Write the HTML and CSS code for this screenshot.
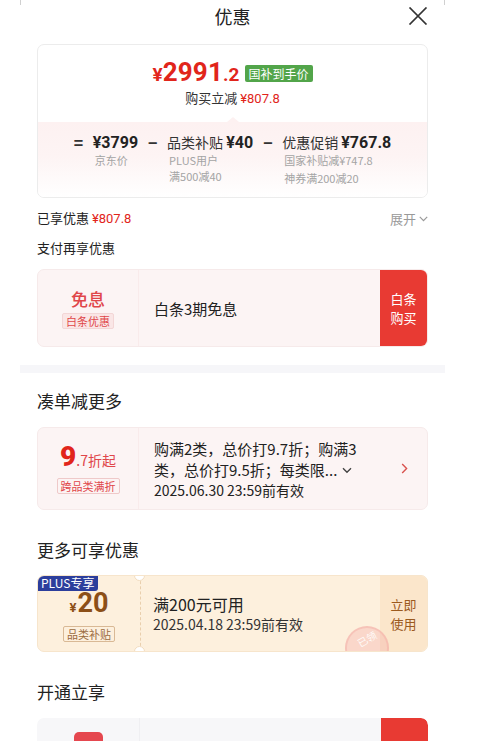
FILE: index.html
```html
<!DOCTYPE html>
<html lang="zh-CN">
<head>
<meta charset="utf-8">
<title>优惠</title>
<link rel="stylesheet" href="styles.css">
</head>
<body>
<div class="sheet">
  <header class="header">
    <h1 class="title">优惠</h1>
    <span class="close" aria-label="关闭">
      <svg width="20" height="18" viewBox="0 0 20 18"><path d="M1.5 0.5 L18.5 17.5 M18.5 0.5 L1.5 17.5" stroke="#333" stroke-width="1.7" fill="none"/></svg>
    </span>
  </header>

  <section class="summary">
    <div class="summary-top">
      <div class="price-line">
        <span class="price"><span class="yen">¥</span><span class="int">2991</span><span class="dec">.2</span></span>
        <span class="green-tag">国补到手价</span>
      </div>
      <div class="save-line">购买立减 <span class="red num">¥807.8</span></div>
    </div>
    <div class="summary-bottom">
      <span class="op">=</span>
      <div class="col">
        <div class="amt"><b class="num">¥3799</b></div>
        <div class="sub">京东价</div>
      </div>
      <span class="op minus">−</span>
      <div class="col">
        <div class="amt">品类补贴 <b class="num">¥40</b></div>
        <div class="sub">PLUS用户</div>
        <div class="sub">满500减40</div>
      </div>
      <span class="op minus">−</span>
      <div class="col">
        <div class="amt">优惠促销 <b class="num">¥767.8</b></div>
        <div class="sub">国家补贴减¥747.8</div>
        <div class="sub sub-gap">神券满200减20</div>
      </div>
    </div>
  </section>

  <div class="row enjoyed">
    <span>已享优惠 <span class="red num">¥807.8</span></span>
    <span class="expand">展开 <svg width="9" height="6" viewBox="0 0 9 6"><path d="M0.8 0.8 L4.5 4.6 L8.2 0.8" stroke="#999" stroke-width="1.2" fill="none"/></svg></span>
  </div>
  <div class="row pay-more">支付再享优惠</div>

  <div class="card pink-card card-baitiao">
    <div class="card-left">
      <div class="big-red">免息</div>
      <div class="mini-tag red-tag">白条优惠</div>
    </div>
    <div class="card-main single">白条3期免息</div>
    <div class="red-btn">白条<br>购买</div>
  </div>

  <div class="divider"></div>

  <h2 class="section-title first">凑单减更多</h2>
  <div class="card pink-card card-combo">
    <div class="card-left">
      <div class="discount"><span class="d-big">9</span><span class="d-small">.7折起</span></div>
      <div class="mini-tag red-tag boxed">跨品类满折</div>
    </div>
    <div class="card-main multi">
      <div class="line">购满2类，总价打9.7折；购满3</div>
      <div class="line">类，总价打9.5折；每类限... <svg class="more-ic" width="10" height="7" viewBox="0 0 10 7"><path d="M1 1.2 L5 5.2 L9 1.2" stroke="#444" stroke-width="1.4" fill="none"/></svg></div>
      <div class="line date">2025.06.30 23:59前有效</div>
    </div>
    <div class="arrow">
      <svg width="7" height="11" viewBox="0 0 7 11"><path d="M1.2 1 L5.6 5.5 L1.2 10" stroke="#d9534f" stroke-width="1.4" fill="none"/></svg>
    </div>
  </div>

  <h2 class="section-title">更多可享优惠</h2>
  <div class="card coupon">
    <span class="plus-tag">PLUS专享</span>
    <div class="card-left coupon-left">
      <div class="c-price"><span class="c-yen">¥</span><span class="c-int">20</span></div>
      <div class="mini-tag brown-tag">品类补贴</div>
    </div>
    <div class="card-main coupon-main">
      <div class="c-cond">满200元可用</div>
      <div class="c-date">2025.04.18 23:59前有效</div>
    </div>
    <div class="coupon-btn">立即<br>使用</div>
    <span class="stamp"><span class="stamp-text">已领</span></span>
  </div>

  <h2 class="section-title">开通立享</h2>
  <div class="card gray-card">
    <div class="card-left gray-left"><span class="app-icon"></span></div>
    <div class="card-main"></div>
    <div class="red-btn top-only"></div>
  </div>
</div>
</body>
</html>
```

FILE: styles.css
```css
* { box-sizing: border-box; }
html, body { margin: 0; padding: 0; background: #fff; }
body {
  font-family: "Noto Sans CJK SC", "Noto Sans", sans-serif;
  color: #222;
  width: 500px;
  overflow: hidden;
}
.num { font-family: "Roboto", "Noto Sans CJK SC", sans-serif; }
.sheet {
  width: 425px;
  margin-left: 20px;
  padding: 0 17px;
  position: relative;
}
.sheet::before, .sheet::after {
  content: "";
  position: absolute;
  top: 0;
  width: 1px;
  height: 5px;
  background: #d0d0d0;
}
.sheet::before { left: 0; }
.sheet::after { right: 0; }

.header {
  height: 32px;
  display: flex;
  align-items: center;
  justify-content: center;
  position: relative;
}
.title {
  margin: 0;
  font-size: 18px;
  font-weight: 400;
  line-height: 32px;
  color: #222;
}
.close {
  position: absolute;
  right: 0;
  top: 7px;
  width: 20px;
  height: 18px;
  display: block;
}
.close svg { display: block; }

/* summary card */
.summary {
  margin-top: 12px;
  border: 1px solid #ececec;
  border-radius: 7px;
  overflow: hidden;
  height: 154px;
}
.summary-top {
  height: 77px;
  padding-top: 14px;
  display: flex;
  flex-direction: column;
  align-items: center;
}
.price-line {
  height: 30px;
  display: flex;
  align-items: center;
  gap: 5px;
}
.price {
  color: #e1251b;
  font-family: "Roboto", "Noto Sans", sans-serif;
  font-weight: 700;
  line-height: 30px;
  white-space: nowrap;
}
.yen { font-size: 19px; }
.int { font-size: 26px; letter-spacing: 0.2px; }
.dec { font-size: 19px; }
.green-tag {
  background: #52a54a;
  color: #fff;
  font-size: 12px;
  line-height: 17px;
  height: 17px;
  padding: 0 4px;
  border-radius: 2px;
  margin-top: -2px;
}
.save-line {
  font-size: 13px;
  line-height: 18px;
  color: #333;
}
.red { color: #e1251b; }

.summary-bottom {
  height: 76px;
  position: relative;
  background: linear-gradient(180deg, #fdf1f1 0%, #fdf4f4 45%, #ffffff 100%);
  display: flex;
  justify-content: center;
  align-items: flex-start;
  padding-top: 11px;
  gap: 10px;
}
.summary-bottom::before {
  content: "";
  position: absolute;
  left: 189px;
  top: -5px;
  width: 0;
  height: 0;
  border-left: 6px solid transparent;
  border-right: 6px solid transparent;
  border-bottom: 5px solid #fdf1f1;
}
.op {
  font-size: 16px;
  line-height: 18px;
  color: #333;
  font-weight: 700;
  width: 9px;
  text-align: center;
}
.col { display: flex; flex-direction: column; }
.amt {
  font-size: 14px;
  line-height: 18px;
  color: #333;
  white-space: nowrap;
}
.amt b { font-size: 16px; font-weight: 700; color: #222; }
.sub {
  font-size: 11px;
  line-height: 16px;
  color: #a4a4a4;
  white-space: nowrap;
  padding-left: 2px;
}
.sub-gap { margin-top: 2px; }

/* rows */
.row {
  font-size: 13px;
  line-height: 20px;
  color: #222;
}
.enjoyed {
  margin-top: 10px;
  display: flex;
  justify-content: space-between;
  align-items: center;
}
.expand {
  color: #999;
  display: flex;
  align-items: center;
  gap: 3px;
}
.expand svg { display: block; }
.pay-more { margin-top: 9px; }

/* cards */
.card {
  display: flex;
  border-radius: 7px;
  overflow: hidden;
  position: relative;
}
.pink-card {
  background: #fcf4f4;
  border: 1px solid #f6eaea;
}
.card-baitiao { margin-top: 11px; height: 78px; }
.card-left {
  width: 101px;
  flex: none;
  display: flex;
  flex-direction: column;
  align-items: center;
  justify-content: center;
  border-right: 1px solid #f9ebeb;
}
.big-red {
  color: #e0464a;
  font-size: 17px;
  line-height: 22px;
  font-weight: 500;
}
.mini-tag {
  font-size: 11px;
  line-height: 14px;
  height: 16px;
  padding: 0 3px;
  margin-top: 3px;
  border-radius: 2px;
}
.red-tag {
  color: #e0464a;
  background: #fae6e6;
  border: 1px solid #f3d6d6;
}
.red-tag.boxed { background: transparent; border-color: #efc9c9; margin-top: 4px; }
.card-main {
  flex: 1;
  padding-left: 15px;
  display: flex;
  flex-direction: column;
  justify-content: center;
}
.single { font-size: 15px; color: #222; }
.red-btn {
  width: 47px;
  flex: none;
  background: #e83a33;
  color: #fff;
  font-size: 13px;
  line-height: 19px;
  display: flex;
  align-items: center;
  justify-content: center;
  text-align: center;
}

.divider {
  margin: 18px -17px 0;
  height: 8px;
  background: #f6f6f9;
}

.section-title {
  margin: 29px 0 0;
  font-size: 17px;
  font-weight: 400;
  line-height: 22px;
  color: #222;
}
.section-title.first { margin-top: 17px; }

.card-combo { margin-top: 15px; height: 83px; }
.discount {
  color: #e0464a;
  line-height: 28px;
  white-space: nowrap;
}
.d-big {
  font-family: "Roboto", "Noto Sans", sans-serif;
  font-weight: 900;
  font-size: 28px;
  color: #e1251b;
}
.d-small { font-size: 14px; }
.multi { padding-right: 4px; }
.line {
  font-size: 15px;
  line-height: 21px;
  color: #222;
  white-space: nowrap;
}
.line.date { font-size: 14px; line-height: 20px; }
.more-ic { vertical-align: 2px; margin-left: 1px; }
.arrow {
  width: 30px;
  flex: none;
  display: flex;
  align-items: center;
  padding-left: 4px;
}
.arrow svg { display: block; }

/* coupon */
.coupon {
  margin-top: 14px;
  height: 77px;
  background: #fdf0dd;
  border: 1px solid #f7e5cc;
}
.plus-tag {
  position: absolute;
  left: -1px;
  top: -1px;
  background: #2c3e9c;
  color: #fff;
  font-size: 12px;
  line-height: 16px;
  padding: 0 4px;
  border-bottom-right-radius: 3px;
  z-index: 2;
}
.coupon-left {
  width: 103px;
  border-right: 1px dashed #e9cfad;
  padding-top: 4px;
  position: relative;
}
.coupon-left::before, .coupon-left::after {
  content: "";
  position: absolute;
  right: -5px;
  width: 9px;
  height: 9px;
  border-radius: 50%;
  background: #fff;
  border: 1px solid #f1dcc0;
}
.coupon-left::before { top: -6px; }
.coupon-left::after { bottom: -6px; }
.c-price {
  color: #8c4f17;
  line-height: 28px;
  font-family: "Roboto", "Noto Sans", sans-serif;
  font-weight: 700;
  white-space: nowrap;
}
.c-yen { font-size: 13px; margin-right: 1px; }
.c-int { font-size: 27px; }
.brown-tag {
  color: #9a6a3e;
  border: 1px solid #d9b995;
  margin-top: 4px;
}
.coupon-main { padding-left: 12px; }
.c-cond { font-size: 16px; line-height: 22px; color: #222; }
.c-date { font-size: 14px; line-height: 19px; color: #333; }
.coupon-btn {
  width: 47px;
  flex: none;
  background: #fbe6cb;
  color: #9b5a1e;
  font-size: 13px;
  line-height: 19px;
  display: flex;
  align-items: center;
  justify-content: center;
  text-align: center;
}
.stamp {
  position: absolute;
  left: 307px;
  top: 50px;
  width: 44px;
  height: 44px;
  border-radius: 50%;
  background: rgba(244, 170, 165, 0.35);
  border: 2px solid rgba(244, 170, 165, 0.45);
  display: flex;
  align-items: flex-start;
  justify-content: center;
  padding-top: 5px;
}
.stamp-text {
  color: rgba(255, 255, 255, 0.9);
  font-size: 10px;
  line-height: 12px;
  transform: rotate(-30deg);
}

.gray-card {
  margin-top: 15px;
  height: 80px;
  background: #f7f7f9;
}
.gray-left {
  width: 103px;
  justify-content: flex-start;
  padding-top: 14px;
  border-right: 1px solid #efeff2;
}
.app-icon {
  display: block;
  width: 29px;
  height: 30px;
  border-radius: 5px;
  background: #e5474f;
}
.top-only { border-top-right-radius: 7px; }
```
